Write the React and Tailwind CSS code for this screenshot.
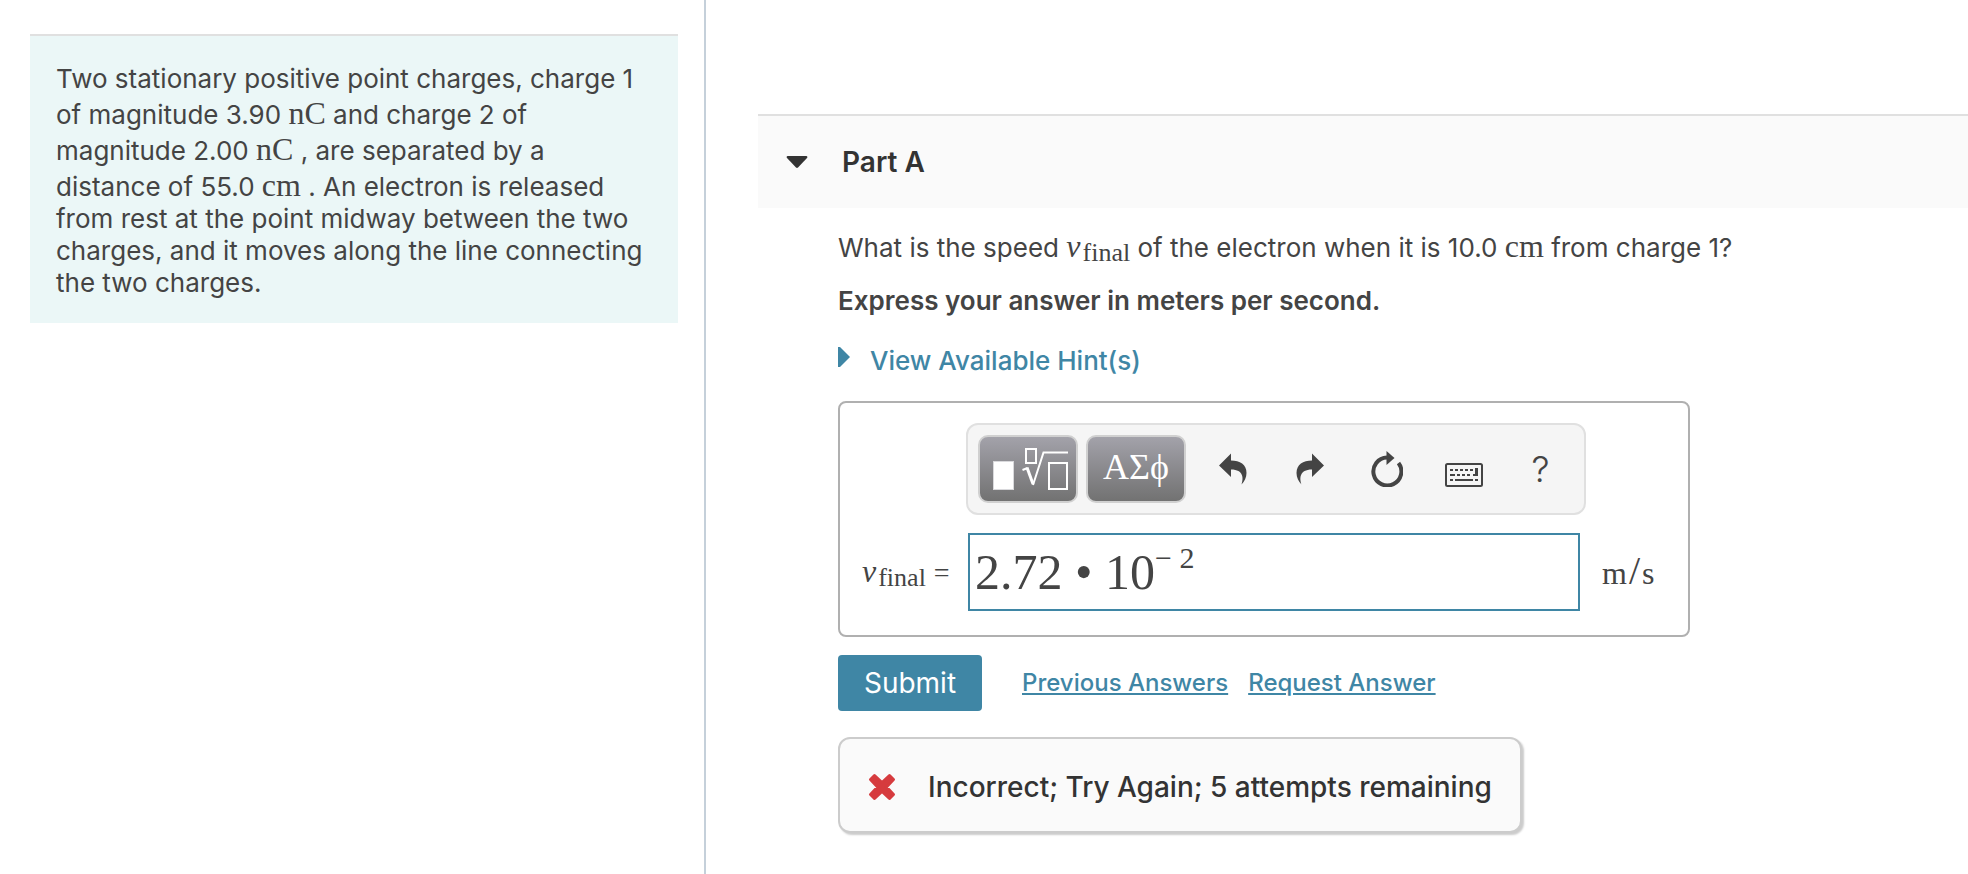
// src/App.jsx
import { useState } from "react";

// Serif run for units and variables
function Math({ children }) {
  return (
    <span className="font-['Liberation_Serif',serif] text-[32px] leading-9">
      {children}
    </span>
  );
}

function VFinal() {
  return (
    <span className="font-['Liberation_Serif',serif] text-[32px] leading-8">
      <i>v</i>
      <span className="relative top-1 ml-0.5 text-[26px]">final</span>
    </span>
  );
}

function TemplatesIcon() {
  return (
    <svg className="h-11 w-20" viewBox="0 0 80 44" fill="none" stroke="white" strokeWidth="2">
      <rect x="5.500" y="14.500" width="20" height="28" fill="white" stroke="#d9d9dc" strokeWidth="1" />
      <rect x="38" y="2" width="10" height="14" />
      <path d="M34.500 23l5-2" />
      <path d="M39 20.500l6 16.500" strokeWidth="3" />
      <path d="M45 38L55.500 5.500H80" />
      <rect x="61" y="16" width="18" height="26" />
    </svg>
  );
}

function UndoIcon() {
  return (
    <svg className="h-8 w-7" viewBox="0 0 28 32" fill="#444">
      <path d="M0 12.500L12 0.500V7.500C21 7.500 27.500 11.500 27.500 20C27.500 24.500 25.500 28.500 22.500 31.500C24.500 26 25 16.500 12 16.500V24Z" />
    </svg>
  );
}

function RedoIcon() {
  return (
    <svg className="h-8 w-7" viewBox="0 0 28 32" fill="#444">
      <path d="M28 12.500L16 0.500V7.500C7 7.500 0.500 11.500 0.500 20C0.500 24.500 2.500 28.500 5.500 31.500C3.500 26 3 16.500 16 16.500V24Z" />
    </svg>
  );
}

function ResetIcon() {
  return (
    <svg className="h-9 w-8" viewBox="0 0 32 36" fill="none">
      <path d="M27.500 12A14 14 0 1 1 16 6.500" stroke="#444" strokeWidth="4" />
      <path d="M15.500 0L23.500 7L15.500 14Z" fill="#444" />
    </svg>
  );
}

function KeyboardIcon() {
  return (
    <svg className="h-6 w-10" viewBox="0 0 40 24" fill="#444">
      <rect x="2" y="1" width="36" height="22" rx="1.500" fill="none" stroke="#444" strokeWidth="2" />
      <path d="M6 6h3v2H6zM11 6h3v2h-3zM16 6h3v2h-3zM21 6h3v2h-3zM26 6h3v2h-3z" />
      <path d="M31 5h3v8h-5v-2h2zM6 11h5v2H6zM13 11h3v2h-3zM18 11h3v2h-3zM23 11h3v2h-3z" />
      <path d="M6 16h3v2H6zM11 16h18v2H11zM31 16h3v2h-3z" />
    </svg>
  );
}

const tools = [
  { name: "Undo", icon: <UndoIcon /> },
  { name: "Redo", icon: <RedoIcon /> },
  { name: "Reset", icon: <ResetIcon /> },
  { name: "Keyboard shortcuts", icon: <span className="pt-3"><KeyboardIcon /></span> },
];

const paletteButton =
  "flex h-[68px] w-[100px] items-center justify-center rounded-[10px] border-2 border-[#d0d0d0] bg-linear-to-b from-[#a3a2aa] to-[#727272] text-white";

function AnswerBox() {
  const [base, setBase] = useState("2.72 • 10");
  const [exponent, setExponent] = useState("− 2");

  return (
    <div className="mt-6 max-w-[852px] rounded-lg border-2 border-[#b0b0b0] pt-5 pb-6 text-[#444]">
      {/* TOOLBAR */}
      <div className="ml-[126px] flex h-[92px] w-[620px] items-center rounded-xl border-2 border-[#e0e0e0] bg-[#f5f5f5] pl-[10px]">
        <button type="button" aria-label="Templates" className={paletteButton}>
          <TemplatesIcon />
        </button>
        <button
          type="button"
          className={`${paletteButton} ml-2 pb-1 font-['Liberation_Serif',serif] text-4xl`}
        >
          ΑΣϕ
        </button>
        <div className="ml-2 flex">
          {tools.map((t) => (
            <button
              key={t.name}
              type="button"
              aria-label={t.name}
              className="flex h-12 w-[77px] items-center justify-center"
            >
              {t.icon}
            </button>
          ))}
          <button type="button" className="h-12 w-[77px] text-4xl font-light">
            ?
          </button>
        </div>
      </div>

      {/* ANSWER FIELD */}
      <div className="mt-[18px] flex items-center">
        <label htmlFor="answer" className="w-32 pl-[22px] whitespace-nowrap">
          <VFinal />
          <span className="ml-2 font-['Liberation_Serif',serif] text-[28px]">=</span>
        </label>
        <div className="flex h-[78px] w-[612px] items-center border-2 border-[#3f86a5] bg-white pl-[5px] font-['Liberation_Serif',serif]">
          <input
            id="answer"
            value={base}
            onChange={(e) => setBase(e.target.value)}
            className="w-[180px] text-[50px] outline-none"
          />
          <input
            aria-label="Exponent"
            value={exponent}
            onChange={(e) => setExponent(e.target.value)}
            className="mb-7 min-w-0 flex-1 text-[30px] outline-none"
          />
        </div>
        <span className="ml-[22px] font-['Liberation_Serif',serif] text-[32px]">
          m<span className="mx-0.5 text-[40px]">/</span>s
        </span>
      </div>
    </div>
  );
}

export default function App() {
  const [open, setOpen] = useState(true);

  return (
    <div className="grid min-h-screen grid-cols-[353fr_631fr] bg-white font-[Inter,sans-serif] text-[26px] leading-8 text-[#444]">
      {/* PROBLEM STATEMENT */}
      <aside className="min-w-0 border-r-2 border-[#c5d0da] pt-[34px] pr-[26px] pl-[30px]">
        <p className="border-t-2 border-[#e0e0e0] bg-[#ebf7f7] px-[26px] pt-[27px] pb-6">
          Two stationary positive point charges, charge 1 of magnitude 3.90 <Math>nC</Math> and charge 2 of
          magnitude 2.00 <Math>nC</Math> , are separated by a distance of 55.0 <Math>cm</Math> . An electron is
          released from rest at the point midway between the two charges, and it moves along the line
          connecting the two charges.
        </p>
      </aside>

      {/* QUESTION */}
      <main className="min-w-0 pt-[114px] pl-[52px]">
        <header className="flex h-[94px] items-center border-t-2 border-[#e0e0e0] bg-[#fafafa] pl-7">
          <button
            type="button"
            aria-expanded={open}
            onClick={() => setOpen(!open)}
            className="flex items-center gap-[34px] text-[28px] font-semibold text-[#333]"
          >
            <svg className="h-3 w-[22px]" viewBox="0 0 22 12" fill="#333">
              <path d="M1.500 0H20.500Q22 .5 21 2L12 11.500Q11 12.300 10 11.500L1 2Q0 .5 1.500 0Z" />
            </svg>
            Part A
          </button>
        </header>

        {open && (
          <section className="pl-20">
            <p className="mt-5">
              What is the speed <VFinal /> of the electron when it is 10.0 <Math>cm</Math> from charge 1?
            </p>
            <p className="mt-5 font-semibold">Express your answer in meters per second.</p>
            <a href="#hints" className="mt-7 flex w-fit items-start gap-5 font-medium text-[#3f86a5]">
              <svg className="mt-0.5 h-5 w-3" viewBox="0 0 12 20" fill="#3f86a5">
                <path d="M0 0H2L12 10L2 20H0Z" />
              </svg>
              View Available Hint(s)
            </a>

            <AnswerBox />

            <div className="mt-[18px] flex items-center">
              <button type="button" className="h-14 w-36 rounded bg-[#3f86a5] text-[28px] text-white">
                Submit
              </button>
              <a href="#previous" className="ml-10 text-2xl font-medium text-[#3f86a5] underline decoration-2 underline-offset-2">
                Previous Answers
              </a>
              <a href="#request" className="ml-5 text-2xl font-medium text-[#3f86a5] underline decoration-2 underline-offset-2">
                Request Answer
              </a>
            </div>

            {/* FEEDBACK */}
            <div
              role="status"
              className="mt-[26px] flex h-24 w-fit items-center gap-8 rounded-xl border-2 border-[#ccc] bg-[#fafafa] px-7 pt-1 text-[28px] font-medium text-[#333] shadow-[2px_2px_2px_#ccc]"
            >
              <svg className="size-7" viewBox="0 0 28 28" fill="#d63b3e" stroke="#d63b3e" strokeWidth="3" strokeLinejoin="round">
                <path d="M6.500 2.500L14 9.500L21.500 2.500L25.500 6.500L18.500 14L25.500 21.500L21.500 25.500L14 18.500L6.500 25.500L2.500 21.500L9.500 14L2.500 6.500Z" />
              </svg>
              Incorrect; Try Again; 5 attempts remaining
            </div>
          </section>
        )}
      </main>
    </div>
  );
}
